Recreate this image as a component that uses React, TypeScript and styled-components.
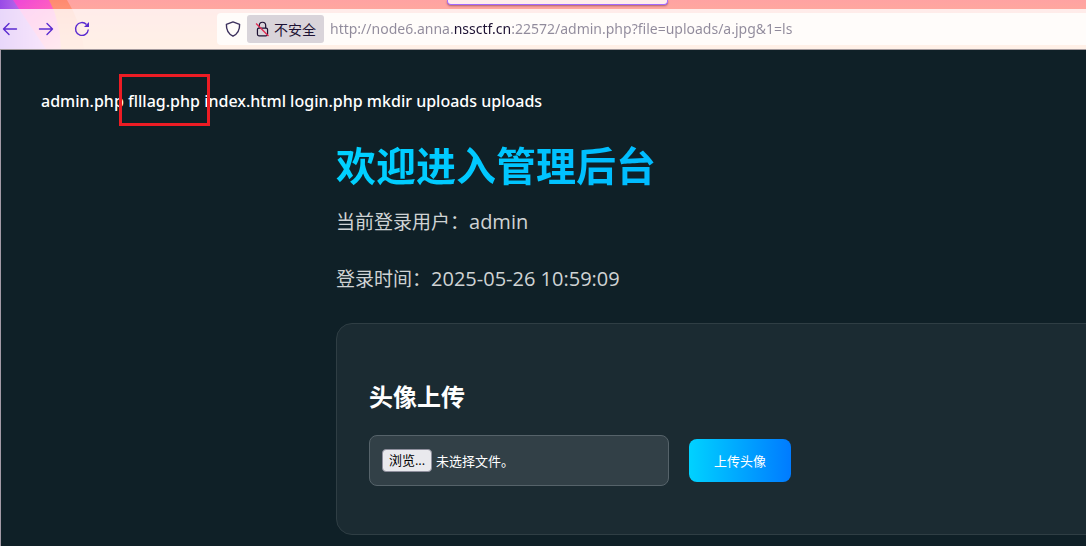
import React from 'react';
import styled, { createGlobalStyle } from 'styled-components';

const Global = createGlobalStyle`
  * { box-sizing: border-box; }
  body {
    margin: 0;
    background: #0f2027;
    color: #fff;
    font-family: "Open Sans", "Noto Sans CJK SC", sans-serif;
  }
  h1, h2, p { margin: 0; }
`;

const Window = styled.div`
  min-height: 100vh;
  display: flex;
  flex-direction: column;
  overflow: hidden;
`;

const Chrome = styled.header`
  position: relative;
  background: linear-gradient(#ffa2a2, #ffbd91);
  border-bottom: 1px solid #a39a9d;
`;

const ThemeArt = styled.svg`
  position: absolute;
  left: 0;
  top: 0;
`;

const TabStrip = styled.div`
  position: relative;
  height: 9px;
  padding-left: 447px;
  overflow: hidden;
`;

const ActiveTab = styled.div`
  width: 221px;
  height: 5px;
  background: #ffeeed;
  border: 1px solid #a46bff;
  border-top: 0;
  border-radius: 0 0 4px 4px;
  box-shadow: 0 1px 2px rgba(90, 30, 60, 0.5);
`;

const Toolbar = styled.div`
  position: relative;
  display: flex;
  align-items: center;
  height: 40px;
  background: rgba(255, 255, 255, 0.78);
`;

const NavButtons = styled.nav`
  display: flex;
  flex: none;
  width: 217px;
  padding-left: 2px;
  gap: 20px;
`;

const IconButton = styled.button`
  display: flex;
  padding: 0;
  border: 0;
  background: none;
  color: #5b2bd0;
`;

const AddressBar = styled.div`
  flex: 1;
  display: flex;
  align-items: center;
  height: 32px;
  padding-left: 8px;
  background: #fffcfa;
  border-radius: 4px 0 0 4px;
  color: #3b2f5c;
`;

const SecurityButton = styled.button`
  display: flex;
  align-items: center;
  gap: 4px;
  height: 28px;
  width: 77px;
  margin: 0 6px;
  padding: 0 8px;
  border: 0;
  border-radius: 3px;
  background: #d9d4da;
  color: #1d1133;
  font: 14px "Noto Sans CJK SC", sans-serif;
  line-height: 26px;
  white-space: nowrap;
`;

const UrlInput = styled.input`
  flex: 1;
  min-width: 0;
  height: 28px;
  padding: 0 0 2px;
  border: 0;
  outline: 0;
  background: linear-gradient(90deg, #908a9b 124px, #1d1133 124px, #1d1133 181px, #908a9b 181px);
  background-clip: text;
  -webkit-background-clip: text;
  color: transparent;
  font: 14px "Noto Sans", sans-serif;
`;

const Page = styled.main`
  flex: 1;
  padding: 39px 0 12px 40px;
  border-left: 1px solid #a39aa6;
`;

const Listing = styled.div`
  font-family: "Noto Sans", sans-serif;
  font-size: 16px;
  font-weight: 500;
  line-height: 24px;
  white-space: nowrap;
`;

const Marked = styled.span`
  position: relative;
  &::after {
    content: "";
    position: absolute;
    inset: -16px -10px -14px -9px;
    border: 3px solid #ed1c24;
  }
`;

const Panel = styled.section`
  margin-left: 295px;
`;

const Title = styled.h1`
  margin-top: 27px;
  font-size: 40px;
  line-height: 52px;
  font-weight: 700;
  background: linear-gradient(90deg, #00d2ff, #007bff) 0 0 / 1200px 100%;
  background-clip: text;
  -webkit-background-clip: text;
  color: transparent;
`;

const Info = styled.p`
  margin-top: 25px;
  font-size: 19px;
  line-height: 32px;
  color: #cfd3d4;
  ${Title} + & { margin-top: 14px; }
`;

const Value = styled.span`
  font-size: 20px;
`;

const Card = styled.section`
  margin: 28px -24px 0 0;
  padding: 55px 32px 48px;
  border: 1px solid #2f3e44;
  border-radius: 16px;
  background: #1b2b32;
`;

const CardTitle = styled.h2`
  font-size: 24px;
  line-height: 36px;
  font-weight: 700;
`;

const UploadForm = styled.form`
  display: flex;
  align-items: center;
  gap: 20px;
  margin-top: 20px;
`;

const FileField = styled.label`
  position: relative;
  display: flex;
  align-items: center;
  gap: 4px;
  width: 300px;
  height: 51px;
  padding: 0 12px;
  border: 1px solid #56636a;
  border-radius: 8px;
  background: #324047;
  font-size: 13px;
`;

const FileInput = styled.input`
  position: absolute;
  inset: 0;
  width: 100%;
  opacity: 0;
`;

const Browse = styled.span`
  width: 50px;
  height: 23px;
  border: 1px solid #8f8f9d;
  border-radius: 4px;
  background: #e9e9ed;
  color: #000;
  line-height: 21px;
  text-align: center;
`;

const Submit = styled.button`
  width: 102px;
  height: 43px;
  padding: 0;
  border: 0;
  border-radius: 8px;
  background: linear-gradient(90deg, #00d2ff, #007bff);
  color: #fff;
  font: 13px "Noto Sans CJK SC", sans-serif;
`;

function Arrow({ flip }: { flip?: boolean }) {
  return (
    <svg width="16" height="16" viewBox="0 0 16 16" fill="none" stroke="currentColor" strokeWidth="1.4" strokeLinecap="round" strokeLinejoin="round">
      <path d={flip ? 'M1.5 8h13M9 2.5 14.5 8 9 13.5' : 'M14.5 8h-13M7 2.5 1.5 8 7 13.5'} />
    </svg>
  );
}

export default function App() {
  return (
    <Window>
      <Global />
      <Chrome>
        <ThemeArt width="90" height="49" viewBox="0 0 90 49" aria-hidden="true">
          <defs>
            <linearGradient id="violet" x1="0" x2="1">
              <stop offset="0" stopColor="#984be6" />
              <stop offset="1" stopColor="#e08cee" />
            </linearGradient>
            <linearGradient id="pink" x1="0" x2="1" y2="1">
              <stop offset="0" stopColor="#e83fe0" />
              <stop offset="0.5" stopColor="#ff5fc0" />
              <stop offset="1" stopColor="#ff9fb8" />
            </linearGradient>
            <linearGradient id="coral" x1="0" x2="0" y2="1">
              <stop offset="0" stopColor="#ff8a70" />
              <stop offset="1" stopColor="#ffb28c" />
            </linearGradient>
          </defs>
          <path d="M0 0h67q14 22 17 49H0z" fill="url(#coral)" />
          <path d="M0 0h49q11 20 12 49H0z" fill="url(#pink)" />
          <path d="M0 0h13l33 49H0z" fill="url(#violet)" />
        </ThemeArt>
        <TabStrip><ActiveTab /></TabStrip>
        <Toolbar>
          <NavButtons aria-label="导航">
            <IconButton aria-label="后退"><Arrow /></IconButton>
            <IconButton aria-label="前进"><Arrow flip /></IconButton>
            <IconButton aria-label="刷新">
              <svg width="16" height="16" viewBox="0 0 16 16" fill="none" stroke="currentColor" strokeWidth="1.4">
                <path d="M14.3 8.5A6.4 6.4 0 1 1 12.5 3.5" />
                <path d="M15 1v5h-5z" fill="currentColor" stroke="none" />
              </svg>
            </IconButton>
          </NavButtons>
          <AddressBar>
            <svg width="16" height="16" viewBox="0 0 16 16" fill="none" stroke="currentColor" strokeWidth="1.4" strokeLinejoin="round">
              <path d="M8 .9 14.6 3.4C14.8 8.5 12.6 13 8 15.2 3.4 13 1.2 8.5 1.4 3.4z" />
            </svg>
            <SecurityButton>
              <svg width="16" height="16" viewBox="0 0 16 16" fill="none" stroke="currentColor" strokeWidth="1.3">
                <rect x="2.6" y="7" width="10.8" height="8.3" rx="1.6" />
                <path d="M4.6 7V4.2a3.4 3.4 0 0 1 6.8 0V7" />
                <path d="M1.2 2.2 14.4 15.4" stroke="#e22850" strokeWidth="1.4" />
              </svg>
              不安全
            </SecurityButton>
            <UrlInput aria-label="地址" defaultValue="http://node6.anna.nssctf.cn:22572/admin.php?file=uploads/a.jpg&1=ls" />
          </AddressBar>
        </Toolbar>
      </Chrome>
      <Page>
        <Listing>
          admin.php <Marked>flllag.php</Marked> index.html login.php mkdir uploads uploads
        </Listing>
        <Panel>
          <Title>欢迎进入管理后台</Title>
          <Info>当前登录用户：<Value>admin</Value></Info>
          <Info>登录时间：<Value>2025-05-26 10:59:09</Value></Info>
          <Card>
            <CardTitle>头像上传</CardTitle>
            <UploadForm onSubmit={(e) => e.preventDefault()}>
              <FileField>
                <FileInput type="file" />
                <Browse>浏览...</Browse>
                未选择文件。
              </FileField>
              <Submit type="submit">上传头像</Submit>
            </UploadForm>
          </Card>
        </Panel>
      </Page>
    </Window>
  );
}
